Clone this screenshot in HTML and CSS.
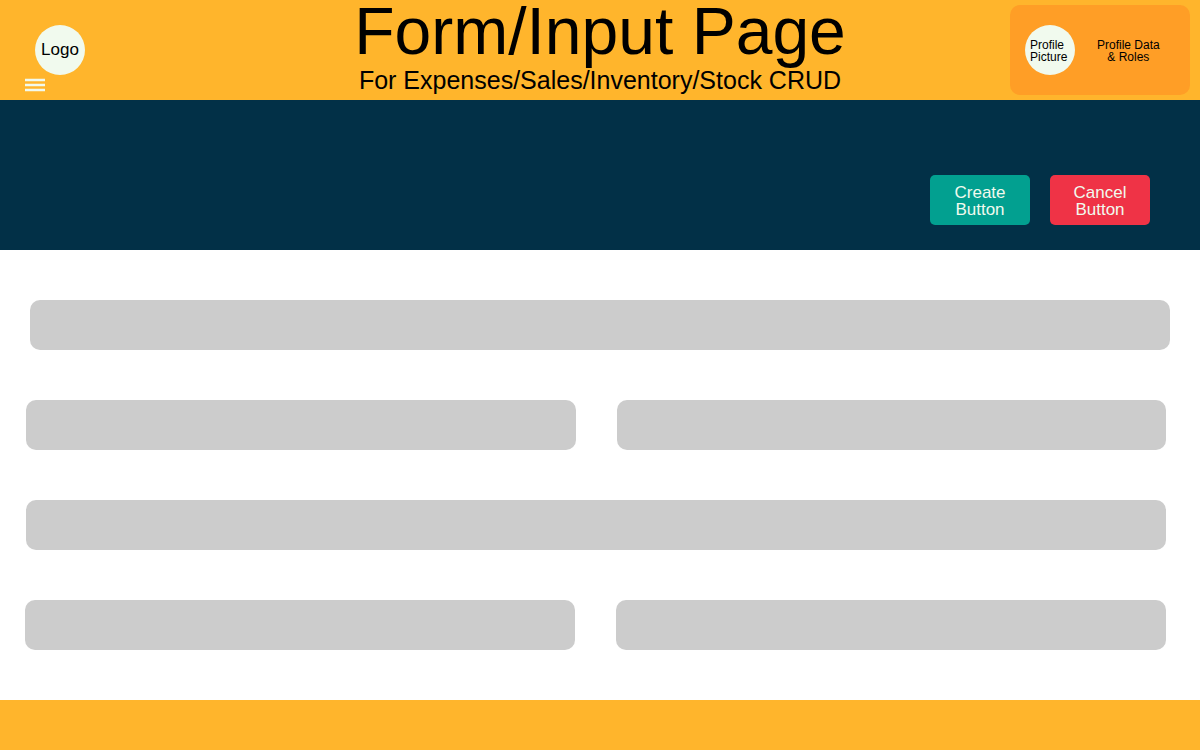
FILE: index.html
```html
<!DOCTYPE html>
<html lang="en">
<head>
  <meta charset="utf-8">
  <meta name="viewport" content="width=device-width, initial-scale=1">
  <title>Form/Input Page</title>
  <link rel="stylesheet" href="styles.css">
</head>
<body>
  <header class="header">
    <div class="brand">
      <a class="logo" href="#">Logo</a>
      <button class="menu" type="button" aria-label="Menu">
        <svg class="menu-icon" viewBox="0 0 20 13" aria-hidden="true">
          <path d="M0 -.3h20v2.5H0zM0 4.8h20v2.5H0zM0 9.8h20v2.5H0z"/>
        </svg>
      </button>
    </div>
    <div class="heading">
      <h1 class="title">Form/Input Page</h1>
      <p class="subtitle">For Expenses/Sales/Inventory/Stock CRUD</p>
    </div>
    <div class="profile">
      <div class="avatar">Profile<br>Picture</div>
      <p class="profile-data">Profile Data<br>&amp; Roles</p>
    </div>
  </header>
  <main class="main">
    <div class="toolbar">
      <button class="button create" type="submit" form="entry">Create<br>Button</button>
      <button class="button cancel" type="reset" form="entry">Cancel<br>Button</button>
    </div>
    <form class="form" id="entry">
      <div class="row row-first">
        <input class="field" type="text" aria-label="Field 1">
      </div>
      <div class="row row-second">
        <input class="field" type="text" aria-label="Field 2">
        <input class="field" type="text" aria-label="Field 3">
      </div>
      <div class="row row-third">
        <input class="field" type="text" aria-label="Field 4">
      </div>
      <div class="row row-fourth">
        <input class="field" type="text" aria-label="Field 5">
        <input class="field" type="text" aria-label="Field 6">
      </div>
    </form>
  </main>
  <footer class="footer"></footer>
</body>
</html>
```

FILE: styles.css
```css
* {
  box-sizing: border-box;
}

body {
  display: flex;
  flex-direction: column;
  min-height: 100vh;
  margin: 0;
  background: #fff;
  color: #000;
  font-family: "Liberation Sans", Arial, sans-serif;
}

.header {
  display: grid;
  grid-template-columns: 1fr auto 1fr;
  min-height: 100px;
  background: #ffb52c;
}

.brand {
  display: flex;
  flex-direction: column;
  align-items: flex-start;
  gap: 4px;
  padding: 25px 25px 0;
}

.logo {
  display: flex;
  align-items: center;
  justify-content: center;
  width: 50px;
  height: 50px;
  margin-left: 10px;
  padding-bottom: 2px;
  border-radius: 50%;
  background: #f1faee;
  color: #000;
  font-size: 17px;
  line-height: 17px;
  text-decoration: none;
}

.menu {
  display: block;
  padding: 0;
  border: 0;
  background: none;
  cursor: pointer;
}

.menu-icon {
  display: block;
  width: 20px;
  height: 13px;
  overflow: visible;
  fill: #f1faee;
}

.heading {
  text-align: center;
}

.title {
  margin: 0;
  font-size: 66px;
  font-weight: 400;
  line-height: 62px;
}

.subtitle {
  margin: 4px 0 0;
  font-size: 25px;
  line-height: 28px;
}

.profile {
  display: flex;
  align-items: center;
  justify-self: end;
  gap: 22px;
  width: 180px;
  margin: 5px 10px 5px 0;
  padding: 0 15px;
  border-radius: 10px;
  background: #ff9e26;
  font-size: 12px;
  line-height: 12px;
}

.avatar {
  display: flex;
  flex: none;
  align-items: center;
  justify-content: flex-start;
  width: 50px;
  height: 50px;
  padding: 2px 0 0 5px;
  border-radius: 50%;
  background: #f1faee;
}

.profile-data {
  margin: 0;
  padding-top: 2px;
  text-align: center;
  white-space: nowrap;
}

.main {
  flex: 1;
}

.toolbar {
  display: flex;
  align-items: flex-end;
  justify-content: flex-end;
  gap: 20px;
  min-height: 150px;
  padding: 25px 50px;
  background: #023047;
}

.button {
  width: 100px;
  height: 50px;
  padding: 2px 0 0;
  border: 0;
  border-radius: 5px;
  color: #f1faee;
  font-family: inherit;
  font-size: 17px;
  line-height: 17px;
  cursor: pointer;
}

.create {
  background: #02a090;
}

.cancel {
  background: #ef3346;
}

.form {
  display: flex;
  flex-direction: column;
  gap: 50px;
  padding: 50px 0;
}

.row {
  display: flex;
  gap: 41px;
}

.row-first {
  padding: 0 30px;
}

.row-second,
.row-third {
  padding: 0 34px 0 26px;
}

.row-fourth {
  padding: 0 34px 0 25px;
}

.field {
  flex: 1;
  min-width: 0;
  height: 50px;
  padding: 0 15px;
  border: 0;
  border-radius: 10px;
  background: #ccc;
  font-family: inherit;
  font-size: 17px;
}

.footer {
  min-height: 50px;
  background: #ffb52c;
}
```
